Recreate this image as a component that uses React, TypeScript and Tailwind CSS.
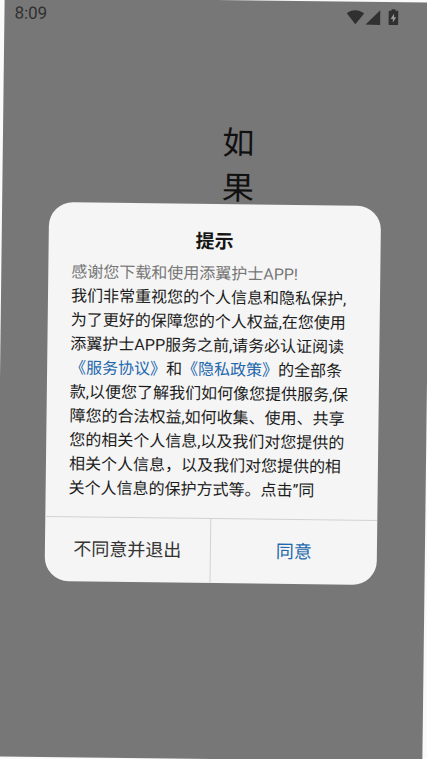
import React, { useState } from 'react';

const fontClass = "font-['Roboto','Noto_Sans_CJK_SC',sans-serif]";

const StatusBar: React.FC = () => {
    return (
        <header className="flex items-center justify-between pt-[5px] pl-[10px] pr-[33px] text-[#303030]">
            <time className="text-[17px] leading-5">8:09</time>
            <div className="flex items-center">
                <svg className="w-[18px] h-[15px]" viewBox="0 0 18 15" fill="currentColor">
                    <path d="M9 14.6 L0.3 3.7 C2.6 1.8 5.6 0.6 9 0.6 C12.4 0.6 15.4 1.8 17.7 3.7 Z" />
                </svg>
                <svg className="w-[15px] h-[15px] ml-px" viewBox="0 0 15 15" fill="currentColor">
                    <path d="M15 0 V15 H0 Z" />
                </svg>
                <svg className="w-[10px] h-4 ml-2" viewBox="0 0 10 16">
                    <path fill="currentColor" d="M3 0 H7 V1.6 H9 Q10 1.6 10 2.6 V15 Q10 16 9 16 H1 Q0 16 0 15 V2.6 Q0 1.6 1 1.6 H3 Z" />
                    <path fill="#999999" d="M5.6 4.4 V8 H7.8 L4.4 13.4 V9.8 H2.2 Z" />
                </svg>
            </div>
        </header>
    );
};

interface ConsentDialogProps {
    onAccept: () => void;
    onDecline: () => void;
}

const ConsentDialog: React.FC<ConsentDialogProps> = ({ onAccept, onDecline }) => {
    return (
        <div className="absolute inset-0 flex items-center justify-center pl-[47px] pr-12 pt-7">
            <section
                role="dialog"
                aria-labelledby="consent-title"
                className="w-full max-w-md overflow-hidden rounded-3xl bg-[#f5f5f5]"
            >
                <h2 id="consent-title" className="pt-6 text-center text-[19px] leading-7 font-bold text-[#151515]">
                    提示
                </h2>

                <div className="pt-[6px] pb-4 pl-[23px] pr-6 text-base leading-6 text-[#1c1c1c]">
                    <p className="text-[#777777]">感谢您下载和使用添翼护士APP!</p>
                    <p>
                        我们非常重视您的个人信息和隐私保护,为了更好的保障您的个人权益,在您使用添翼护士APP服务之前,请务必认证阅读
                        <a href="#terms" className="text-[#2367ad]">《服务协议》</a>
                        和
                        <a href="#privacy" className="text-[#2367ad]">《隐私政策》</a>
                        的全部条款,以便您了解我们如何像您提供服务,保障您的合法权益,如何收集、使用、共享您的相关个人信息,以及我们对您提供的相关个人信息，以及我们对您提供的相关个人信息的保护方式等。点击”同
                    </p>
                </div>

                <div className="grid grid-cols-2 border-t border-[#d2d2d2] text-lg">
                    <button type="button" onClick={onDecline} className="h-16 border-r border-[#d2d2d2] text-[#333333]">
                        不同意并退出
                    </button>
                    <button type="button" onClick={onAccept} className="h-16 text-[#2367ad]">
                        同意
                    </button>
                </div>
            </section>
        </div>
    );
};

export default function App() {
    const [open, setOpen] = useState(true);

    return (
        <div className="min-h-screen overflow-hidden bg-[#fafafa]">
            {/* The whole screen sits at a slight tilt */}
            <main className={`relative min-h-screen rotate-[0.7deg] bg-[#777777] ${fontClass}`}>
                <StatusBar />

                <div className="flex flex-col items-center pt-24 pl-11 text-[32px] leading-[45px] text-[#111111]">
                    <span>如</span>
                    <span>果</span>
                </div>

                {open && <ConsentDialog onAccept={() => setOpen(false)} onDecline={() => setOpen(false)} />}
            </main>
        </div>
    );
}
